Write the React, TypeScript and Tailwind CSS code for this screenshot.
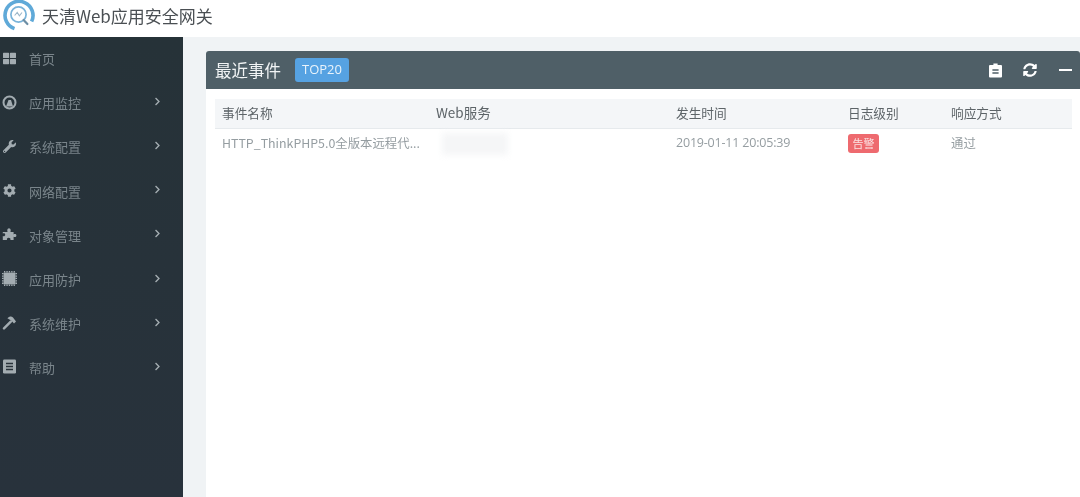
import { FaThLarge, FaWrench, FaCog, FaChevronRight, FaSyncAlt } from "react-icons/fa";

const font = { fontFamily: '"Noto Sans CJK SC", "Open Sans", sans-serif' };

const Gauge = () => (
  <svg width="15" height="15" viewBox="0 0 15 15">
    <circle cx="7.5" cy="7.5" r="6" fill="none" stroke="currentColor" strokeWidth="2" />
    <path d="M4 11.5 L6.5 5 H9 L11 11.5 Z" fill="currentColor" />
  </svg>
);
const Puzzle = () => (
  <svg width="15" height="15" viewBox="0 0 15 15">
    <path fill="currentColor" d="M2 5 H5.6 C5 3.8 5 1.4 7 1.2 C9 1.4 9 3.8 8.4 5 H11.6 V7.4 C12.6 6.8 14.4 7 14.4 8.6 C14.4 10.2 12.6 10.4 11.6 9.8 V13 H8.4 C8.8 11.6 8 10.8 6.6 10.8 C5.2 10.8 4.6 11.8 5 13 H0.8 V9 C1.8 9.6 3.2 9.2 3.2 7.8 C3.2 6.4 1.8 6 0.8 6.6 V5 Z" />
  </svg>
);
const Chip = () => (
  <svg width="15" height="15" viewBox="0 0 15 15">
    <rect x="1.6" y="1.6" width="11.8" height="11.8" fill="currentColor" />
    <path stroke="currentColor" strokeWidth="1.6" strokeDasharray="1.3 1.1" d="M0.8 2 V13.4 M14.2 2 V13.4 M2 0.8 H13.4 M2 14.2 H13.4" fill="none" />
  </svg>
);
const Hammer = () => (
  <svg width="15" height="15" viewBox="0 0 15 15">
    <path d="M2 13.4 L9 6.4" stroke="currentColor" strokeWidth="2.4" strokeLinecap="round" />
    <path fill="currentColor" d="M5.4 3.2 C7.4 1.2 9.4 1 11 2.4 L14 6.4 L12 8.4 L9 5.2 L7.4 4.4 Z" />
  </svg>
);
const HelpList = () => (
  <svg width="13" height="15" viewBox="0 0 13 15">
    <rect x="0" y="0.5" width="13" height="14" rx="1.2" fill="currentColor" />
    <path d="M3 4.5 H10 M3 7.5 H10 M3 10.5 H10" stroke="#28323a" strokeWidth="1.3" />
  </svg>
);
const Clip = () => (
  <svg width="13" height="15" viewBox="0 0 13 15">
    <path fill="white" d="M4.4 0.6 H8.6 V2 H12 Q13 2 13 3 V13.6 Q13 14.6 12 14.6 H1 Q0 14.6 0 13.6 V3 Q0 2 1 2 H4.4 Z" />
    <path d="M3.4 7 H9.6 M3.4 10 H9.6" stroke="#4f5f67" strokeWidth="1.3" />
  </svg>
);
const Logo = () => (
  <svg width="36" height="33" viewBox="0 0 36 33" className="shrink-0 ml-[1px]">
    <path d="M13.5 28.6 A14 14 0 1 1 30.6 21.5" fill="none" stroke="#5fa9d8" strokeWidth="3.6" />
    <circle cx="17.5" cy="14.5" r="7.6" fill="none" stroke="#79b3d9" strokeWidth="1.7" />
    <path d="M13.6 15.5 l2.6 -3 2.2 3.4 2.6 -3.4" fill="none" stroke="#9cb7c9" strokeWidth="1.1" />
    <path d="M22.6 20 l3.8 4" stroke="#6d8ea5" strokeWidth="2.2" strokeLinecap="round" />
  </svg>
);

const menu = [
  { label: "首页", icon: <FaThLarge size={13} />, arrow: false },
  { label: "应用监控", icon: <Gauge />, arrow: true },
  { label: "系统配置", icon: <FaWrench size={13} />, arrow: true },
  { label: "网络配置", icon: <FaCog size={13} />, arrow: true },
  { label: "对象管理", icon: <Puzzle />, arrow: true },
  { label: "应用防护", icon: <Chip />, arrow: true },
  { label: "系统维护", icon: <Hammer />, arrow: true },
  { label: "帮助", icon: <HelpList />, arrow: true },
];

export default function App() {
  return (
    <div style={font} className="w-[1080px] h-[497px] overflow-hidden flex flex-col bg-white blur-[0.4px]">
      <header className="h-[37px] shrink-0 flex items-start bg-white">
        <Logo />
        <span className="ml-[5px] mt-[4px] text-[17px] leading-[24px] text-[#4a4f53]">天清Web应用安全网关</span>
      </header>
      <div className="flex flex-1 min-h-0">
        <aside className="w-[183px] shrink-0 bg-gradient-to-b from-[#263238] to-[#28323c]">
          {menu.map((m) => (
            <div key={m.label} className="h-[44.1px] flex items-center pl-[2px] pr-[20px] text-[#a3acb1]">
              <span className="w-[15px] flex justify-center -mt-[2px]">{m.icon}</span>
              <span className="ml-[12px] text-[13px] text-[#7a858b] flex-1">{m.label}</span>
              {m.arrow && <FaChevronRight size={9} className="text-[#a3acb1] -mt-[3px] mr-[1px]" />}
            </div>
          ))}
        </aside>
        <main className="flex-1 min-w-0 bg-[#f0f3f5] pt-[14px] pl-[23px]">
          <section className="h-full bg-white rounded-t-[3px] flex flex-col">
            <div className="h-[38px] shrink-0 flex items-center bg-[#4f5f67] rounded-t-[3px] pl-[9px] pr-[8px]">
              <span className="text-[16.5px] text-[#f1f4f5]">最近事件</span>
              <span className="ml-[14px] h-[24px] w-[54px] rounded-[3px] bg-[#56a2e2] flex items-center justify-center text-[13px] text-[#e9f3fb]" style={{ fontFamily: '"Open Sans", sans-serif' }}>TOP20</span>
              <div className="ml-auto flex items-center text-white">
                <Clip />
                <FaSyncAlt size={14} className="ml-[21px]" />
                <div className="ml-[22px] w-[13px] h-[1.5px] bg-white" />
              </div>
            </div>
            <div className="pl-[9px] pr-[8px] pt-[10px]">
              <div className="h-[30px] flex items-center bg-[#f4f6f8] border-b border-[#e6eaed] text-[12.7px] text-[#5d6468] pb-[2px]">
                <div className="w-[221px] pl-[7px]">事件名称</div>
                <div className="w-[240px] text-[13.5px]">Web服务</div>
                <div className="w-[172px]">发生时间</div>
                <div className="w-[103px]">日志级别</div>
                <div>响应方式</div>
              </div>
              <div className="h-[31px] flex items-center text-[12.4px] text-[#959da1] pb-[2px]">
                <div className="w-[221px] pl-[7px] whitespace-nowrap">HTTP_ThinkPHP5.0全版本远程代...</div>
                <div className="w-[240px] flex items-center">
                  <div className="ml-[6px] h-[22px] w-[66px] bg-[#f5f6f7] blur-[3px]" />
                </div>
                <div className="w-[172px] text-[12.5px] -tracking-[0.2px]" style={{ fontFamily: '"Open Sans", sans-serif' }}>2019-01-11 20:05:39</div>
                <div className="w-[103px]">
                  <span className="inline-flex items-center justify-center w-[31px] h-[19px] rounded-[3px] bg-[#ee6a6f] text-[#fbe3e4] text-[11px]">告警</span>
                </div>
                <div>通过</div>
              </div>
            </div>
          </section>
        </main>
      </div>
    </div>
  );
}
